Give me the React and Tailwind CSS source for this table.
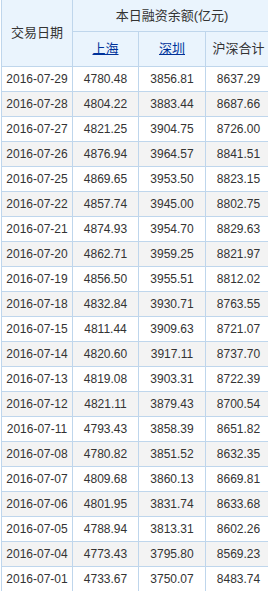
const rows = [
  ["2016-07-29", "4780.48", "3856.81", "8637.29"],
  ["2016-07-28", "4804.22", "3883.44", "8687.66"],
  ["2016-07-27", "4821.25", "3904.75", "8726.00"],
  ["2016-07-26", "4876.94", "3964.57", "8841.51"],
  ["2016-07-25", "4869.65", "3953.50", "8823.15"],
  ["2016-07-22", "4857.74", "3945.00", "8802.75"],
  ["2016-07-21", "4874.93", "3954.70", "8829.63"],
  ["2016-07-20", "4862.71", "3959.25", "8821.97"],
  ["2016-07-19", "4856.50", "3955.51", "8812.02"],
  ["2016-07-18", "4832.84", "3930.71", "8763.55"],
  ["2016-07-15", "4811.44", "3909.63", "8721.07"],
  ["2016-07-14", "4820.60", "3917.11", "8737.70"],
  ["2016-07-13", "4819.08", "3903.31", "8722.39"],
  ["2016-07-12", "4821.11", "3879.43", "8700.54"],
  ["2016-07-11", "4793.43", "3858.39", "8651.82"],
  ["2016-07-08", "4780.82", "3851.52", "8632.35"],
  ["2016-07-07", "4809.68", "3860.13", "8669.81"],
  ["2016-07-06", "4801.95", "3831.74", "8633.68"],
  ["2016-07-05", "4788.94", "3813.31", "8602.26"],
  ["2016-07-04", "4773.43", "3795.80", "8569.23"],
  ["2016-07-01", "4733.67", "3750.07", "8483.74"],
];

const font = { fontFamily: '"Liberation Sans", Arial, "Noto Sans CJK SC", sans-serif' };

export default function App() {
  return (
    <div className="w-[268px] h-[591px] overflow-hidden bg-white pl-px" style={font}>
      <table className="w-[271px] table-fixed border-collapse text-[#333] text-center">
        <colgroup>
          <col className="w-[71px]" />
          <col className="w-[66px]" />
          <col className="w-[67px]" />
          <col className="w-[66px]" />
        </colgroup>
        <thead className="bg-[#eaf4fd] text-[13px]">
          <tr className="h-[31px]">
            <th rowSpan={2} className="border border-t-0 border-[#bfd6ec] font-normal">交易日期</th>
            <th colSpan={3} className="border border-t-0 border-[#bfd6ec] font-normal">本日融资余额(亿元)</th>
          </tr>
          <tr className="h-[35px]">
            <th className="border border-[#bfd6ec] font-normal">
              <a href="#" className="text-[#00329a] underline">上海</a>
            </th>
            <th className="border border-[#bfd6ec] font-normal">
              <a href="#" className="text-[#00329a] underline">深圳</a>
            </th>
            <th className="border border-[#bfd6ec] font-normal">沪深合计</th>
          </tr>
        </thead>
        <tbody className="text-[12px]">
          {rows.map((r, i) => (
            <tr key={r[0]} className={i % 2 ? "h-[25px] bg-[#f3f3f3]" : "h-[25px] bg-white"}>
              {r.map((c, j) => (
                <td key={j} className="border border-[#bfd6ec] p-0">{c}</td>
              ))}
            </tr>
          ))}
        </tbody>
      </table>
    </div>
  );
}
